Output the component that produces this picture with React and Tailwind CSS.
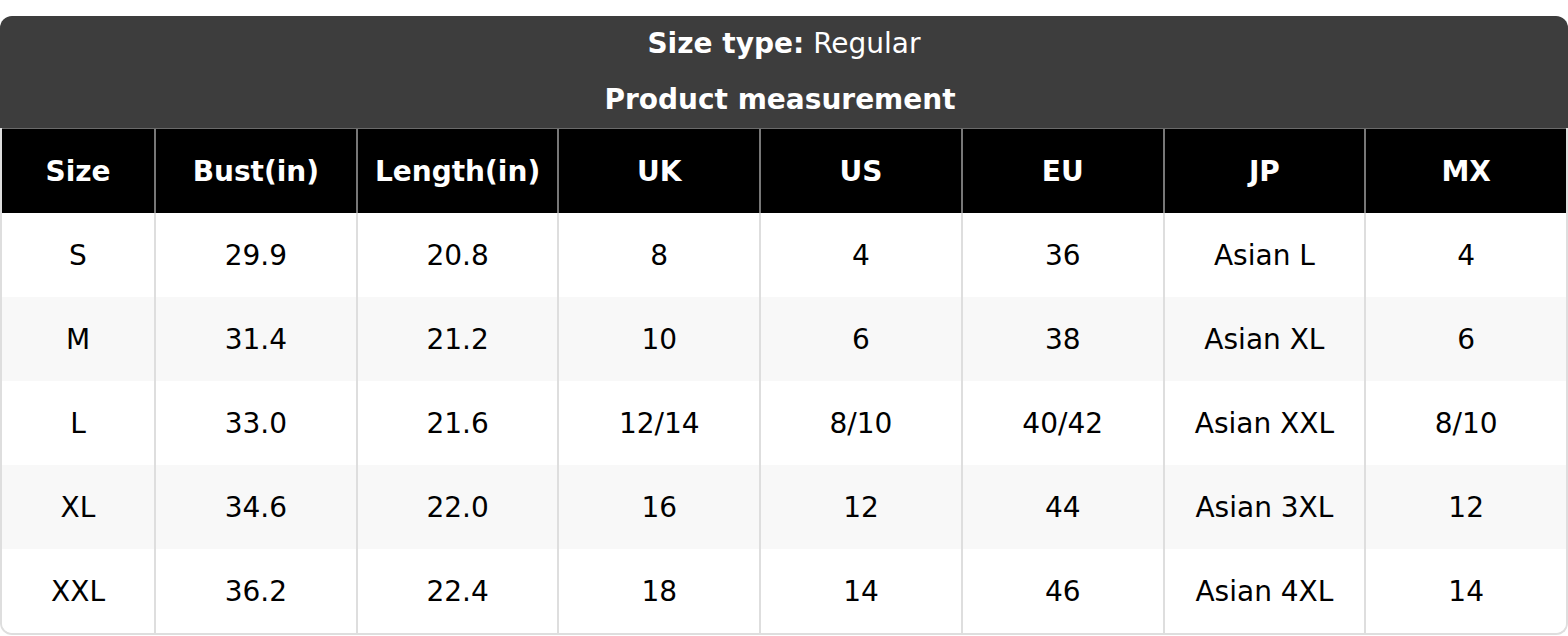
const columns = ['Size', 'Bust(in)', 'Length(in)', 'UK', 'US', 'EU', 'JP', 'MX'];

const rows = [
  ['S', '29.9', '20.8', '8', '4', '36', 'Asian L', '4'],
  ['M', '31.4', '21.2', '10', '6', '38', 'Asian XL', '6'],
  ['L', '33.0', '21.6', '12/14', '8/10', '40/42', 'Asian XXL', '8/10'],
  ['XL', '34.6', '22.0', '16', '12', '44', 'Asian 3XL', '12'],
  ['XXL', '36.2', '22.4', '18', '14', '46', 'Asian 4XL', '14'],
];

const App = () => {
  return (
    <div className="w-[1568px] bg-white pt-[16px] font-['DejaVu_Sans',sans-serif]">
      {/* cabecera */}
      <div className="bg-[#3d3d3d] rounded-t-[12px] text-white text-center text-[28px]">
        <div className="h-[56px] flex items-center justify-center">
          <span className="font-bold">Size type:</span>
          <span className="ml-[9px]">Regular</span>
        </div>
        <div className="h-[56px] flex items-center justify-center font-bold pr-[8px]">
          Product measurement
        </div>
      </div>

      <div className="border-x-2 border-b-2 border-[#dedede] rounded-b-[12px] overflow-hidden">
        {/* columnas */}
        <div className="grid grid-cols-[152px_repeat(7,1fr)] bg-black border-t border-[#6a6a6a] h-[85px]">
          {columns.map((col, i) => (
            <div
              key={col}
              className={`flex items-center justify-center pt-[2px] text-white font-bold text-[28px] ${i > 0 ? 'border-l-2 border-[#777]' : ''}`}
            >
              {col}
            </div>
          ))}
        </div>

        {/* filas */}
        {rows.map((row, r) => (
          <div
            key={row[0]}
            className={`grid grid-cols-[152px_repeat(7,1fr)] h-[84px] ${r % 2 === 1 ? 'bg-[#f8f8f8]' : 'bg-white'}`}
          >
            {row.map((cell, i) => (
              <div
                key={i}
                className={`flex items-center justify-center pt-[2px] text-black text-[28px] ${i > 0 ? 'border-l-2 border-[#dedede]' : ''}`}
              >
                {cell}
              </div>
            ))}
          </div>
        ))}
      </div>
    </div>
  );
};

export default App;
